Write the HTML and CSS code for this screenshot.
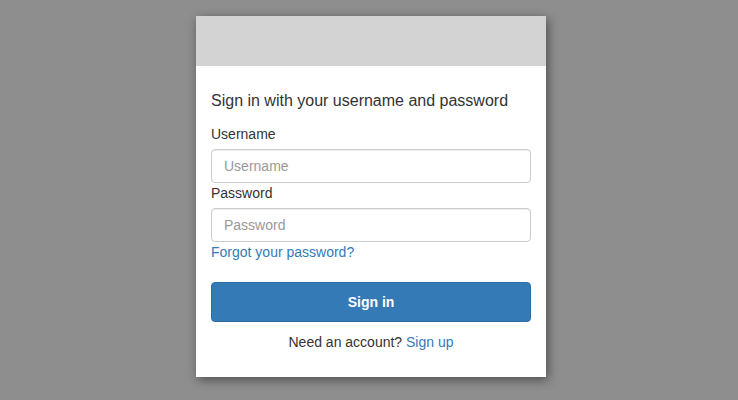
FILE: index.html
```html
<!DOCTYPE html>
<html>
<head>
<meta charset="utf-8">
<link rel="stylesheet" href="styles.css">
</head>
<body>
<div class="card">
  <div class="banner"></div>
  <div class="content">
    <h1 class="title">Sign in with your username and password</h1>
    <label class="label" for="u">Username</label>
    <input class="field" id="u" type="text" placeholder="Username">
    <label class="label" for="p">Password</label>
    <input class="field" id="p" type="password" placeholder="Password">
    <a class="link forgot" href="#">Forgot your password?</a>
    <button class="btn" type="button">Sign in</button>
    <p class="signup">Need an account? <a class="link" href="#">Sign up</a></p>
  </div>
</div>
</body>
</html>
```

FILE: styles.css
```css
html, body {
  margin: 0;
  padding: 0;
}
body {
  background: #8e8e8e;
  font-family: "Liberation Sans", Arial, sans-serif;
  color: #333;
  height: 400px;
  overflow: hidden;
  padding-left: 4px;
  box-sizing: border-box;
}
.card {
  width: 350px;
  margin: 16px auto 0;
  background: #fff;
  box-shadow: 2px 3px 10px rgba(0, 0, 0, 0.45);
}
.banner {
  height: 50px;
  background: #d3d3d3;
}
.content {
  padding: 25px 15px 25px;
  display: flex;
  flex-direction: column;
}
.title {
  margin: 0 0 13px;
  font-size: 16px;
  line-height: 20px;
  font-weight: normal;
  color: #333;
}
.label {
  font-size: 14px;
  line-height: 20px;
  margin-bottom: 5px;
}
.field {
  box-sizing: border-box;
  height: 34px;
  width: 100%;
  margin: 0;
  padding: 6px 12px;
  border: 1px solid #ccc;
  border-radius: 4px;
  font-family: inherit;
  font-size: 14px;
  color: #555;
  box-shadow: inset 0 1px 1px rgba(0, 0, 0, 0.075);
}
.field::placeholder {
  color: #999;
}
.link {
  color: #337ab7;
  text-decoration: none;
}
.forgot {
  font-size: 14px;
  line-height: 20px;
  align-self: flex-start;
}
.btn {
  margin-top: 20px;
  height: 40px;
  width: 100%;
  background: #337ab7;
  border: 1px solid #2e6da4;
  border-radius: 4px;
  color: #fff;
  font-family: inherit;
  font-size: 14px;
  font-weight: bold;
}
.signup {
  margin: 10px 0 0;
  text-align: center;
  font-size: 14px;
  line-height: 20px;
}
```
